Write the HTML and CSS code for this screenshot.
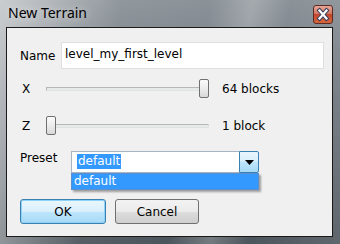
FILE: index.html
```html
<!DOCTYPE html>
<html lang="en">
<head>
  <meta charset="UTF-8">
  <title>New Terrain</title>
  <link rel="stylesheet" href="styles.css">
</head>
<body>

<div class="window">
  <div class="titlebar">
    <span class="title">New Terrain</span>
    <div class="close">
      <svg width="20" height="19" viewBox="0 0 20 19">
        <defs>
          <linearGradient id="closeBg" x1="0" y1="0" x2="0" y2="1">
            <stop offset="0" stop-color="#e9a99b"/>
            <stop offset="0.45" stop-color="#d47864"/>
            <stop offset="0.5" stop-color="#c4472c"/>
            <stop offset="1" stop-color="#d5683e"/>
          </linearGradient>
        </defs>
        <rect x="0.5" y="0.5" width="19" height="18" rx="2.5" fill="url(#closeBg)" stroke="#5b2a20"/>
        <path d="M6.5 5.5 L13.5 13.5 M13.5 5.5 L6.5 13.5" stroke="#3b3f5c" stroke-width="4.2" stroke-linecap="square"/>
        <path d="M6.5 5.5 L13.5 13.5 M13.5 5.5 L6.5 13.5" stroke="#ffffff" stroke-width="2.2" stroke-linecap="square"/>
      </svg>
    </div>
  </div>

  <div class="client">
    <div class="row row-name">
      <span class="label label-name">Name</span>
      <div class="textbox">level_my_first_level</div>
    </div>

    <div class="row row-slider row-x">
      <span class="label label-axis">X</span>
      <div class="slider">
        <div class="track"></div>
        <div class="thumb" style="left: 153px"></div>
      </div>
      <span class="value">64 blocks</span>
    </div>

    <div class="row row-slider row-z">
      <span class="label label-axis">Z</span>
      <div class="slider">
        <div class="track"></div>
        <div class="thumb" style="left: 0px"></div>
      </div>
      <span class="value">1 block</span>
    </div>

    <div class="row row-preset">
      <span class="label label-preset">Preset</span>
      <div class="combo">
        <div class="combo-field"><span class="selected">default</span></div>
        <div class="combo-button">
          <svg width="9" height="5" viewBox="0 0 9 5"><path d="M0 0 H9 L4.5 5 Z" fill="#000"/></svg>
        </div>
        <div class="combo-list">default</div>
      </div>
    </div>

    <div class="buttons">
      <div class="btn btn-default">OK</div>
      <div class="btn">Cancel</div>
    </div>
  </div>
</div>

</body>
</html>
```

FILE: styles.css
```css
body {
  margin: 0;
  padding: 0;
  font-family: "DejaVu Sans", Verdana, sans-serif;
  font-size: 12px;
  color: #000;
}

.window {
  width: 340px;
  height: 244px;
  box-sizing: border-box;
  background:
    linear-gradient(100deg, rgba(255,255,255,0.55) 0%, rgba(255,255,255,0.05) 32%, rgba(255,255,255,0) 55%, rgba(255,255,255,0.22) 66%, rgba(255,255,255,0) 76%, rgba(255,255,255,0.1) 100%),
    linear-gradient(#8b9298 0%, #6f767d 40%, #4d555c 100%);
}

.titlebar {
  height: 27px;
  display: flex;
  align-items: flex-start;
  justify-content: space-between;
}

.title {
  font-family: "Noto Sans", sans-serif;
  font-size: 14px;
  margin: 3px 0 0 8px;
  text-shadow: 0 0 8px rgba(255,255,255,0.7);
}

.close {
  width: 20px;
  height: 19px;
  margin: 5px 7px 0 0;
}
.close svg {
  display: block;
}

.client {
  margin-left: 6px;
  width: 327px;
  height: 210px;
  box-sizing: border-box;
  border: 1px solid #1a1a1a;
  background: #f0f0f0;
  padding: 14px 0 0 13px;
}

.row {
  display: flex;
  align-items: center;
}

.label {
  flex: none;
}
.label-name {
  width: 41px;
}
.label-axis {
  width: 24px;
  padding-left: 2px;
}
.label-preset {
  width: 51px;
  margin-top: -8px;
}

.row-name {
  height: 27px;
}

.textbox {
  width: 263px;
  height: 27px;
  box-sizing: border-box;
  border: 1px solid #dfdfdf;
  background: #fff;
  padding: 4px 0 0 3px;
}

.row-slider {
  height: 19px;
}
.row-x {
  margin-top: 10px;
}
.row-z {
  margin-top: 18px;
}

.slider {
  position: relative;
  width: 163px;
  height: 19px;
  display: flex;
  align-items: center;
}
.track {
  width: 100%;
  height: 4px;
  box-sizing: border-box;
  border: 1px solid #b7b7b7;
  border-bottom-color: #e2e2e2;
  border-right-color: #e2e2e2;
  background: #e7eaea;
}
.thumb {
  position: absolute;
  top: 0;
  width: 10px;
  height: 19px;
  box-sizing: border-box;
  border: 1px solid #707070;
  border-radius: 2px;
  background: linear-gradient(#fbfbfb 0%, #ececec 50%, #d8d8d8 100%);
}

.value {
  margin-left: 13px;
}

.row-preset {
  margin-top: 16px;
  height: 22px;
}

.combo {
  position: relative;
  width: 188px;
  height: 22px;
  display: flex;
}
.combo-field {
  flex: 1;
  box-sizing: border-box;
  border: 1px solid #a6b4c4;
  border-right: none;
  background: #fff;
  padding: 2px 0 0 5px;
}
.selected {
  display: inline-block;
  background: #3399ff;
  color: #fff;
  padding: 0 1px;
  line-height: 15px;
}
.combo-button {
  width: 20px;
  box-sizing: border-box;
  border: 1px solid #3c7fb1;
  border-radius: 0 2px 2px 0;
  background: linear-gradient(#eaf6fd 0%, #d9f0fc 45%, #bee6fd 50%, #a7d9f5 100%);
  display: flex;
  align-items: center;
  justify-content: center;
}
.combo-button svg {
  display: block;
}
.combo-list {
  position: absolute;
  top: 22px;
  left: 0;
  width: 188px;
  height: 17px;
  box-sizing: border-box;
  border: 1px solid #5c8fd0;
  background: #3399ff;
  color: #fff;
  padding: 0 0 0 2px;
  line-height: 15px;
  box-shadow: 2px 2px 2px rgba(0,0,0,0.35);
}

.buttons {
  margin-top: 26px;
  display: flex;
  gap: 9px;
}
.btn {
  width: 84px;
  height: 25px;
  box-sizing: border-box;
  border: 1px solid #707070;
  border-radius: 3px;
  background: linear-gradient(#f2f2f2 0%, #ebebeb 50%, #dddddd 51%, #cfcfcf 100%);
  display: flex;
  align-items: center;
  justify-content: center;
}
.btn-default {
  width: 86px;
  border-color: #3c7fb1;
  background: linear-gradient(#eaf6fd 0%, #d9f0fc 50%, #bee6fd 51%, #a7d9f5 100%);
  box-shadow: inset 0 0 0 1px #8dd3f7;
}
```
